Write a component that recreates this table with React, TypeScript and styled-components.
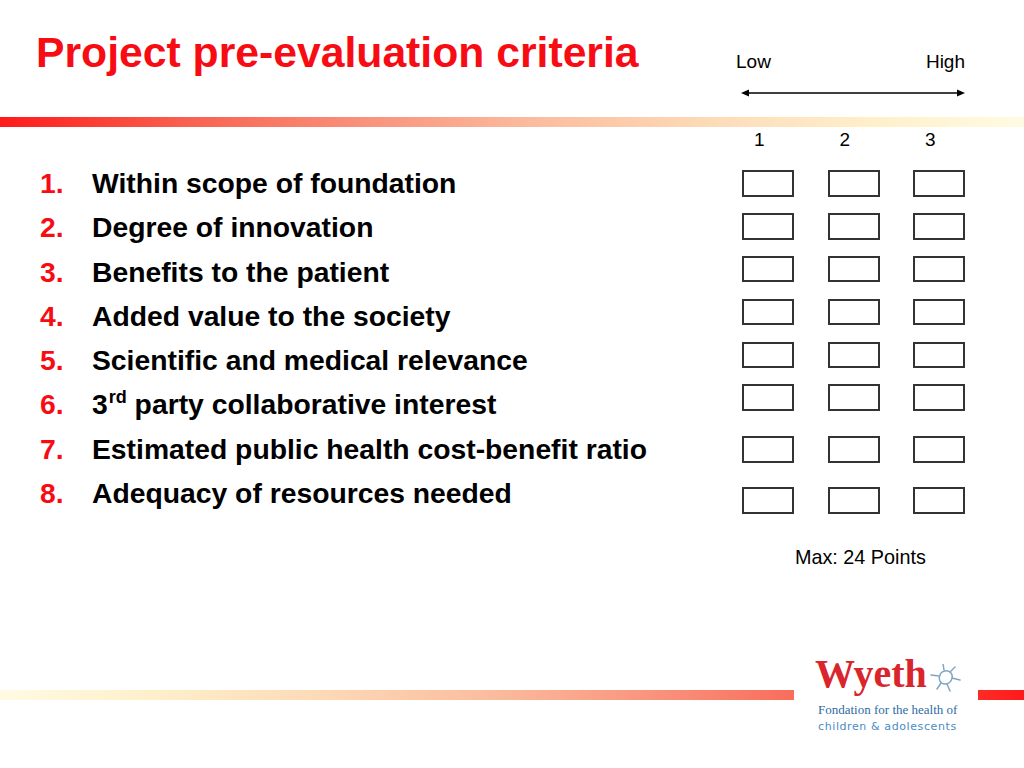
import React from 'react'
import styled, { createGlobalStyle } from 'styled-components'

const GlobalStyle = createGlobalStyle`
  html, body {
    margin: 0;
    padding: 0;
    background: #ffffff;
  }
  body {
    font-family: "Liberation Sans", Arial, sans-serif;
    color: #000;
  }
`

const RED = '#f80c14'

const Page = styled.div`
  width: 1024px;
  height: 768px;
  display: flex;
  flex-direction: column;
  overflow: hidden;
  background: #fff;
`

const Header = styled.header`
  display: flex;
  align-items: flex-start;
  height: 117px;
  padding-top: 28px;
  box-sizing: border-box;
`

const Title = styled.h1`
  margin: 0 0 0 36px;
  font-size: 42.7px;
  line-height: 48px;
  font-weight: 700;
  color: ${RED};
  white-space: nowrap;
`

const Scale = styled.div`
  margin: 24px 59px 0 auto;
  width: 229px;
  display: flex;
  flex-direction: column;
`

const ScaleLabels = styled.div`
  display: flex;
  justify-content: space-between;
  font-size: 19px;
  line-height: 20px;
`

const ArrowSvg = styled.svg`
  display: block;
  margin: 16px 0 0 5px;
`

const GradientBar = styled.div<{ $reverse?: boolean }>`
  height: 10px;
  width: 100%;
  background: linear-gradient(
    ${p => (p.$reverse ? '270deg' : '90deg')},
    #ff1a1a 0%,
    #f9604f 18%,
    #f9907a 35%,
    #fbbc9e 52%,
    #fddcb8 70%,
    #fff0cc 86%,
    #fffbe2 100%
  );
`

const Body = styled.main`
  display: flex;
  align-items: flex-start;
`

const List = styled.ol`
  list-style: none;
  margin: 0;
  padding: 34px 0 0 40px;
`

const Item = styled.li`
  display: flex;
  font-size: 28.3px;
  line-height: 44.3px;
  font-weight: 700;
  white-space: nowrap;
`

const ItemNumber = styled.span`
  width: 52px;
  color: ${RED};
`

const Sup = styled.sup`
  font-size: 18px;
  line-height: 0;
  vertical-align: 0;
  position: relative;
  top: -11px;
  margin-left: 1px;
`

const Ratings = styled.section`
  margin: 3px 59px 0 auto;
  width: 223px;
  display: flex;
  flex-direction: column;
`

const RatingGrid = styled.div<{ $gap?: number }>`
  display: grid;
  grid-template-columns: repeat(3, 52px);
  column-gap: 33.5px;
  margin-top: ${p => p.$gap ?? 0}px;
`

const ScoreLabel = styled.span`
  font-size: 19px;
  line-height: 20px;
  padding-left: 12px;
`

const Box = styled.div`
  width: 52px;
  height: 26.5px;
  box-sizing: border-box;
  border: 2px solid #333;
  background: #fff;
`

const MaxNote = styled.p`
  margin: 33px 0 0 53px;
  font-size: 19.8px;
  line-height: 20px;
  white-space: nowrap;
`

const Footer = styled.footer`
  position: relative;
  margin-top: auto;
  height: 120px;
  padding-top: 42px;
  box-sizing: border-box;
`

const Logo = styled.div`
  position: absolute;
  left: 794px;
  top: 0;
  width: 184px;
  height: 92px;
  background: #fff;
  box-sizing: border-box;
  padding: 6px 0 0 21px;
`

const WyethRow = styled.div`
  display: flex;
  align-items: flex-end;
`

const Wyeth = styled.span`
  font-family: "Liberation Serif", "Times New Roman", serif;
  font-weight: 700;
  font-size: 40px;
  line-height: 40px;
  color: #d9252b;
`

const Sun = styled.svg`
  display: block;
  margin: 0 0 2px 3px;
`

const Fondation = styled.div`
  margin: 8px 0 0 3px;
  font-family: "Liberation Serif", "Times New Roman", serif;
  font-size: 13px;
  line-height: 15px;
  color: #2e6ca4;
  white-space: nowrap;
`

const Children = styled.div`
  margin: 2px 0 0 3px;
  font-family: "DejaVu Sans", sans-serif;
  font-size: 11px;
  line-height: 16px;
  letter-spacing: 0.6px;
  color: #4a8cc4;
  white-space: nowrap;
`

const criteria: React.ReactNode[] = [
  'Within scope of foundation',
  'Degree of innovation',
  'Benefits to the patient',
  'Added value to the society',
  'Scientific and medical relevance',
  <>3<Sup>rd</Sup> party collaborative interest</>,
  'Estimated public health cost-benefit ratio',
  'Adequacy of resources needed',
]

// gap above each row of boxes (they don't line up with the list exactly)
const rowGaps = [20, 16.5, 16, 16.5, 16.5, 16, 25.5, 24.5]

function Arrow() {
  return (
    <ArrowSvg width="224" height="10" viewBox="0 0 224 10">
      <line x1="3" y1="5" x2="221" y2="5" stroke="#000" strokeWidth="1.5" />
      <polygon points="0,5 8,1.5 8,8.5" fill="#000" />
      <polygon points="224,5 216,1.5 216,8.5" fill="#000" />
    </ArrowSvg>
  )
}

function SunMark() {
  const rays = [
    [14, 6, 13, 0],
    [20, 8, 25, 3],
    [22, 14, 30, 16],
    [17, 20, 20, 27],
    [11, 19, 7, 25],
    [9, 12, 1, 11],
  ]
  return (
    <Sun width="31" height="28" viewBox="0 0 31 28">
      <path
        d="M10 11 C11 7, 18 5, 21 9 C24 13, 21 20, 15 20 C10 20, 8 15, 10 11 Z"
        fill="none"
        stroke="#7fa6c4"
        strokeWidth="1.5"
      />
      {rays.map(([x1, y1, x2, y2], i) => (
        <line key={i} x1={x1} y1={y1} x2={x2} y2={y2} stroke="#7fa6c4" strokeWidth="1.5" strokeLinecap="round" />
      ))}
    </Sun>
  )
}

export default function App() {
  return (
    <>
      <GlobalStyle />
      <Page>
        <Header>
          <Title>Project pre-evaluation criteria</Title>
          <Scale>
            <ScaleLabels>
              <span>Low</span>
              <span>High</span>
            </ScaleLabels>
            <Arrow />
          </Scale>
        </Header>
        <GradientBar />
        <Body>
          <List>
            {criteria.map((c, i) => (
              <Item key={i}>
                <ItemNumber>{i + 1}.</ItemNumber>
                <span>{c}</span>
              </Item>
            ))}
          </List>
          <Ratings>
            <RatingGrid>
              <ScoreLabel>1</ScoreLabel>
              <ScoreLabel>2</ScoreLabel>
              <ScoreLabel>3</ScoreLabel>
            </RatingGrid>
            {rowGaps.map((g, i) => (
              <RatingGrid key={i} $gap={g}>
                <Box />
                <Box />
                <Box />
              </RatingGrid>
            ))}
            <MaxNote>Max: 24 Points</MaxNote>
          </Ratings>
        </Body>
        <Footer>
          <GradientBar $reverse />
          <Logo>
            <WyethRow>
              <Wyeth>Wyeth</Wyeth>
              <SunMark />
            </WyethRow>
            <Fondation>Fondation for the health of</Fondation>
            <Children>children &amp; adolescents</Children>
          </Logo>
        </Footer>
      </Page>
    </>
  )
}
